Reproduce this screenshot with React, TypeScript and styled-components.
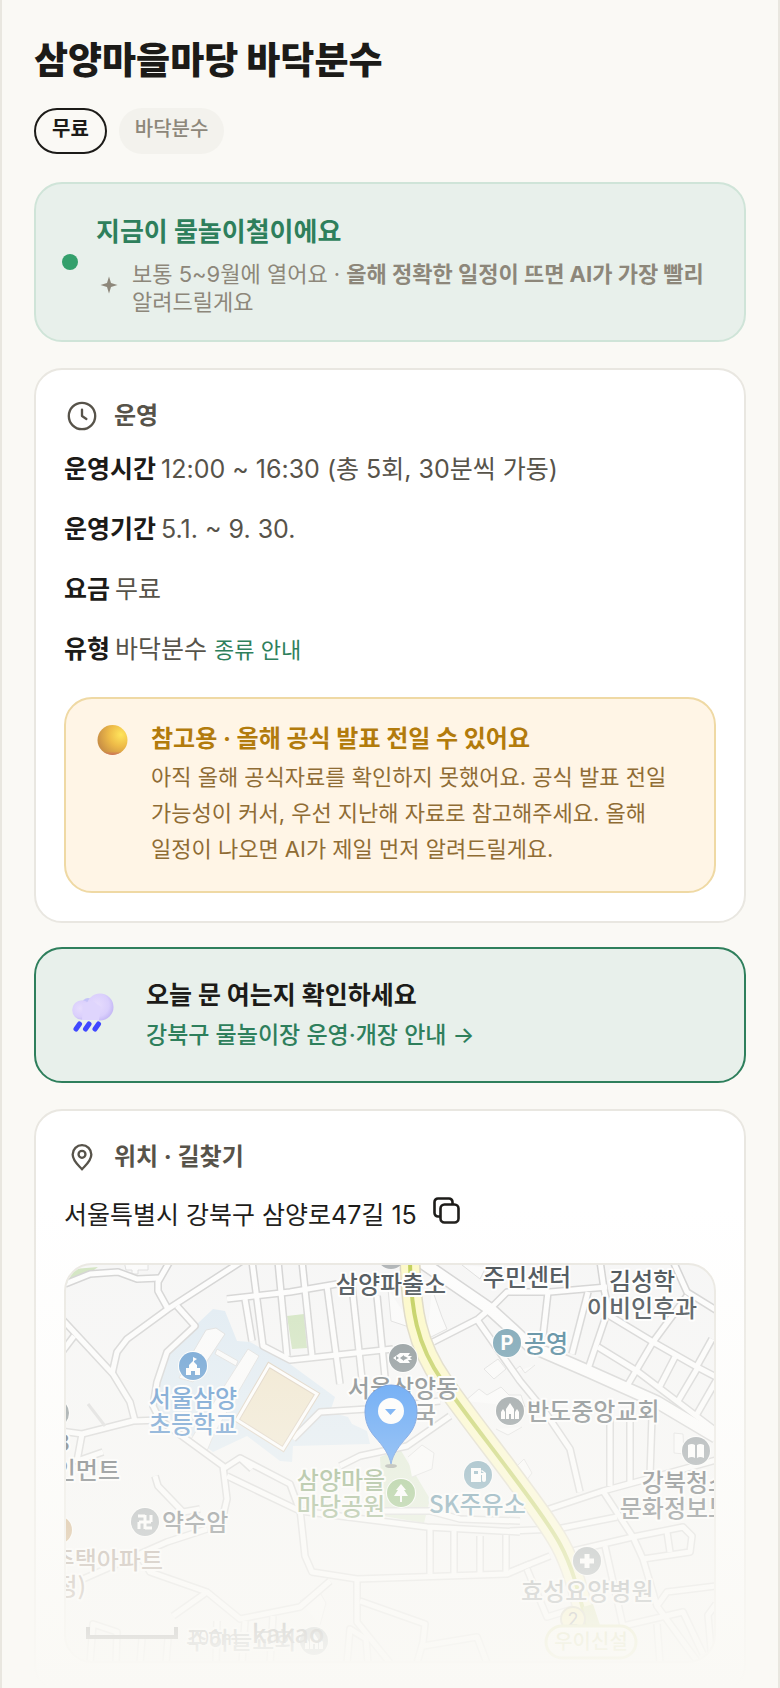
import React from "react";
import styled, { createGlobalStyle, css } from "styled-components";

const GlobalStyle = createGlobalStyle`
  *, *::before, *::after { box-sizing: border-box; }
  html, body { margin: 0; background: #faf9f5; }
  body {
    font-family: Inter, "Noto Sans CJK KR", sans-serif;
    color: #1c1b18;
    word-break: keep-all;
  }
  h1, h2, p, dl, dd { margin: 0; }
`;

const Frame = styled.main`
  position: relative;
  height: 100vh;
  overflow: hidden;
  padding: 32px;
  background: #faf9f5;
  border: 0 solid #e9e7e0;
  border-width: 0 2px;
`;

const Title = styled.h1`
  font-size: 37px;
  line-height: 58px;
  font-weight: 800;
`;

const Tags = styled.ul`
  display: flex;
  gap: 12px;
  margin: 18px 0 28px;
  padding: 0;
  list-style: none;
`;

const Tag = styled.li<{ $outlined?: boolean }>`
  padding: 4px 16px 8px;
  border-radius: 24px;
  font-size: 20px;
  line-height: 34px;
  font-weight: 500;
  color: #8d877a;
  background: #f3f2ed;
  ${(p) =>
    p.$outlined &&
    css`
      padding: 2px 16px 6px;
      border: 2px solid #1c1b18;
      background: transparent;
      color: #1c1b18;
      font-weight: 700;
    `}
`;

const panel = css`
  border: 2px solid #e9e7e1;
  border-radius: 28px;
`;

const Season = styled.section`
  ${panel}
  display: flex;
  align-items: center;
  gap: 18px;
  margin-bottom: 26px;
  padding: 24px 26px;
  border-color: #cfe4d8;
  background: #e8f0eb;
`;

const Dot = styled.span`
  flex: none;
  width: 16px;
  height: 16px;
  border-radius: 50%;
  background: #34a06c;
`;

const SeasonTitle = styled.h2`
  margin-bottom: 4px;
  font-size: 26px;
  line-height: 48px;
  font-weight: 700;
  color: #2e7f5c;
`;

const SeasonNote = styled.div`
  display: flex;
  align-items: center;
  gap: 14px;
  padding-left: 4px;
  color: #8d877a;
  font-size: 22px;
  line-height: 28px;

  svg { flex: none; margin-bottom: 6px; }
`;

const Card = styled.section`
  ${panel}
  margin-bottom: 24px;
  padding: 28px;
  background: #fff;
`;

const CardTitle = styled.h2`
  display: flex;
  align-items: center;
  gap: 14px;
  font-size: 24px;
  line-height: 36px;
  font-weight: 700;
  color: #57534a;

  svg { margin: 0 2px; flex: none; }
`;

const Facts = styled.dl`
  display: grid;
  gap: 20px;
  margin: 15px 0 27px;
  font-size: 25px;
  line-height: 40px;
  color: #57534a;
`;

const Fact = styled.div`
  display: flex;
  align-items: baseline;
  gap: 5px;

  dt { font-weight: 700; color: #1c1b18; }
  a { font-size: 22px; color: #2e7f5c; text-decoration: none; }
`;

const Notice = styled.aside`
  ${panel}
  display: flex;
  gap: 21px;
  padding: 22px 30px 24px;
  border-color: #efd9a4;
  background: #fff5e6;

  svg { flex: none; margin-top: 2px; }
`;

const NoticeTitle = styled.h2`
  margin-bottom: 2px;
  font-size: 24px;
  line-height: 36px;
  font-weight: 700;
  color: #b27b0c;
`;

const NoticeText = styled.p`
  font-size: 22px;
  line-height: 36px;
  color: #8f6c34;
`;

const OpenLink = styled.a`
  ${panel}
  display: flex;
  align-items: center;
  gap: 26px;
  margin-bottom: 26px;
  padding: 26px 36px;
  border-color: #2e7f5c;
  background: #e8f0eb;
  text-decoration: none;
  font-size: 23px;
  line-height: 40px;
  font-weight: 500;
  color: #2e7f5c;

  strong {
    display: block;
    font-size: 25px;
    font-weight: 700;
    color: #1c1b18;
  }
`;

const Address = styled.div`
  display: flex;
  align-items: center;
  gap: 14px;
  margin: 18px 0 26px;
  font-size: 25px;
  line-height: 44px;
`;

const CopyButton = styled.button`
  display: flex;
  padding: 0 0 8px;
  border: 0;
  background: none;
  color: #1c1b18;
`;

const MapBox = styled.div`
  ${panel}
  height: 400px;
  overflow: hidden;
  background: #f6f6f6;

  svg { display: block; width: 100%; height: 100%; }
`;

const Fade = styled.div`
  position: absolute;
  inset: auto -2px 0;
  height: 480px;
  background: linear-gradient(rgba(250, 249, 245, 0), #faf9f5);
  pointer-events: none;
`;

const ClockIcon = () => (
  <svg width="32" height="32" viewBox="0 0 24 24" fill="none" stroke="currentColor" strokeWidth="1.750" strokeLinecap="round" strokeLinejoin="round" aria-hidden>
    <circle cx="12" cy="12" r="9.900" />
    <path d="M12 7.200V12l3.300 2.200" />
  </svg>
);

const PinIcon = () => (
  <svg width="32" height="32" viewBox="0 0 24 24" fill="none" stroke="currentColor" strokeWidth="1.750" strokeLinecap="round" strokeLinejoin="round" aria-hidden>
    <path d="M12 21.200c-1.500-2-7-6-7-11.100a7 7 0 0 1 14 0c0 5.100-5.500 9.100-7 11.100z" />
    <circle cx="12" cy="10" r="2.600" />
  </svg>
);

const CopyIcon = () => (
  <svg width="32" height="32" viewBox="0 0 32 32" fill="none" stroke="currentColor" strokeWidth="2.600" strokeLinejoin="round" aria-hidden>
    <rect x="9.500" y="9.500" width="18" height="18" rx="4" />
    <path d="M9.500 21.500H7a3.500 3.500 0 0 1-3.500-3.500V7A3.500 3.500 0 0 1 7 3.500h11a3.500 3.500 0 0 1 3.500 3.500v2.500" />
  </svg>
);

const SparkIcon = () => (
  <svg width="18" height="18" viewBox="0 0 18 18" fill="currentColor" aria-hidden>
    <path d="M9 .5l2 6.500 6.500 2-6.500 2-2 6.500-2-6.500L.5 9 7 7z" />
  </svg>
);

const CoinIcon = () => (
  <svg width="34" height="34" viewBox="0 0 34 34" aria-hidden>
    <defs>
      <radialGradient id="coin" cx=".78" cy=".32" r=".8">
        <stop offset="0" stopColor="#ffe55c" />
        <stop offset=".5" stopColor="#eebb48" />
        <stop offset="1" stopColor="#c98f45" />
      </radialGradient>
      <linearGradient id="rim" x1="0" y1="0" x2="0" y2="1">
        <stop offset=".88" stopColor="#d0705a" stopOpacity="0" />
        <stop offset="1" stopColor="#d0705a" />
      </linearGradient>
    </defs>
    <circle cx="16.500" cy="17" r="15" fill="url(#coin)" />
    <circle cx="16.500" cy="17" r="15" fill="url(#rim)" />
  </svg>
);

const RainIcon = () => (
  <svg width="48" height="48" viewBox="0 0 48 48" aria-hidden>
    <defs>
      <radialGradient id="puff" cx=".4" cy=".42" r=".62">
        <stop offset="0" stopColor="#e6dcfd" />
        <stop offset=".7" stopColor="#dacffc" />
        <stop offset="1" stopColor="#c4b8f5" />
      </radialGradient>
    </defs>
    <circle cx="16" cy="13" r="6" fill="#c5c3f8" />
    <circle cx="28" cy="16" r="13.500" fill="url(#puff)" />
    <circle cx="10" cy="19" r="9.800" fill="url(#puff)" />
    <path d="M11 12l10-2 8 6-2 13H10z" fill="#dfd5fd" />
    <path d="M7.500 33L4 38M17 33l-3.500 5M26.500 33L23 38" stroke="#4048ff" strokeWidth="5" strokeLinecap="round" />
  </svg>
);

const STREETS = [
  "65,1285 90,1275 118,1273 137,1280 160,1279",
  "170,1262 158,1283 158,1292 168,1310",
  "242,1262 168,1310 127,1340 117,1353 112,1375",
  "62,1320 113,1375 130,1403 135,1422",
  "60,1432 82,1435 133,1422 160,1421 223,1467 227,1500 223,1517",
  "62,1353 74,1337",
  "177,1307 195,1327 167,1353 157,1383 153,1407 160,1421",
  "82,1435 77,1462 103,1453",
  "227,1300 290,1293 337,1285",
  "252,1262 263,1347 290,1361 393,1350",
  "278,1262 287,1357",
  "302,1262 312,1357",
  "245,1300 252,1342",
  "327,1287 340,1385",
  "352,1287 362,1380",
  "377,1297 385,1378",
  "433,1343 478,1320 493,1307 507,1293 550,1293 607,1288",
  "478,1322 520,1382 543,1410 570,1450 580,1493",
  "548,1293 543,1337",
  "588,1293 572,1355",
  "600,1262 604,1290 610,1317 653,1343 697,1368 716,1378",
  "605,1320 588,1370",
  "598,1348 637,1372 716,1432",
  "687,1297 653,1343 627,1387",
  "673,1262 687,1293 716,1311",
  "712,1340 697,1367",
  "675,1358 660,1387",
  "697,1370 678,1402",
  "716,1382 697,1415",
  "610,1420 610,1487",
  "630,1423 630,1483",
  "652,1417 650,1477",
  "543,1512 603,1492 647,1480 716,1461",
  "603,1492 633,1538 643,1560 657,1607 697,1662",
  "510,1532 557,1530 617,1518",
  "573,1552 633,1538 683,1528 692,1537 690,1553 643,1560",
  "667,1533 670,1553",
  "510,1573 550,1557",
  "527,1570 547,1618 573,1610",
  "605,1547 623,1627",
  "657,1607 667,1593 716,1587",
  "623,1627 683,1613 703,1655",
  "716,1605 708,1616 712,1662",
  "657,1625 660,1664",
  "300,1510 305,1557 312,1573 357,1580 507,1575 530,1565",
  "240,1459 290,1485 300,1512 427,1528 520,1533",
  "227,1477 300,1512",
  "223,1470 240,1459 252,1470",
  "430,1528 430,1575",
  "454,1532 454,1575",
  "480,1537 480,1575",
  "506,1536 506,1575",
  "330,1582 300,1608 240,1620 207,1593 150,1573 140,1557",
  "357,1580 357,1623 390,1664",
  "360,1602 425,1625 423,1643 417,1664",
  "423,1647 477,1638 487,1664",
  "347,1664 350,1630 366,1640 368,1664",
  "155,1477 158,1487 183,1513 200,1510",
  "83,1580 167,1543 207,1530",
  "207,1593 173,1617",
  "90,1664 93,1625 117,1633 116,1664",
  "140,1664 142,1640",
  "166,1664 168,1640",
  "216,1664 217,1622",
  "242,1664 245,1622",
  "270,1664 273,1617",
  "293,1440 320,1413 367,1410 440,1402",
  "340,1467 360,1457 407,1447 450,1417",
  "383,1512 430,1512 460,1520 520,1522",
];

const AVENUE = "420,1262 490,1310 512,1330 530,1347 590,1373 657,1403 716,1438";
const MAIN_ROAD = "M410 1262C411 1310 416 1345 443 1383S490 1446 510 1473S548 1523 560 1545S578 1590 588 1630";

type Tone = "dark" | "grey" | "blue" | "teal" | "green" | "tan";
const TONES: Record<Tone, { text: string; badge: string }> = {
  dark: { text: "#3b444a", badge: "#8b9499" },
  grey: { text: "#646c70", badge: "#7e898d" },
  blue: { text: "#4484c6", badge: "#5291cd" },
  teal: { text: "#39768f", badge: "#6496aa" },
  green: { text: "#71955c", badge: "#7eb364" },
  tan: { text: "#8a7464", badge: "#bf9154" },
};

type Label = { x: number; y: number; text: string; tone: Tone; anchor?: "start" | "middle" | "end" };
const LABELS: Label[] = [
  { x: 391, y: 1294, text: "삼양파출소", tone: "dark", anchor: "middle" },
  { x: 527, y: 1287, text: "주민센터", tone: "dark", anchor: "middle" },
  { x: 642, y: 1291, text: "김성학", tone: "dark", anchor: "middle" },
  { x: 642, y: 1318, text: "이비인후과", tone: "dark", anchor: "middle" },
  { x: 524, y: 1353, text: "공영", tone: "teal" },
  { x: 527, y: 1421, text: "반도중앙교회", tone: "grey" },
  { x: 403, y: 1398, text: "서울삼양동", tone: "grey", anchor: "middle" },
  { x: 403, y: 1424, text: "우체국", tone: "grey", anchor: "middle" },
  { x: 193, y: 1408, text: "서울삼양", tone: "blue", anchor: "middle" },
  { x: 193, y: 1434, text: "초등학교", tone: "blue", anchor: "middle" },
  { x: 341, y: 1490, text: "삼양마을", tone: "green", anchor: "middle" },
  { x: 341, y: 1516, text: "마당공원", tone: "green", anchor: "middle" },
  { x: 429, y: 1514, text: "SK주유소", tone: "teal" },
  { x: 697, y: 1492, text: "강북청소년", tone: "dark", anchor: "middle" },
  { x: 697, y: 1518, text: "문화정보도서관", tone: "dark", anchor: "middle" },
  { x: 162, y: 1532, text: "약수암", tone: "dark" },
  { x: 521, y: 1601, text: "효성요양병원", tone: "grey" },
  { x: 70, y: 1452, text: "3", tone: "dark", anchor: "end" },
  { x: 120, y: 1480, text: "인먼트", tone: "dark", anchor: "end" },
  { x: 163, y: 1570, text: "주택아파트", tone: "tan", anchor: "end" },
  { x: 86, y: 1596, text: "정)", tone: "tan", anchor: "end" },
  { x: 186, y: 1650, text: "주하늘교회", tone: "grey" },
];

const Badge = ({ x, y, tone, children }: { x: number; y: number; tone: Tone; children?: React.ReactNode }) => (
  <g transform={`translate(${x} ${y})`}>
    <circle r="15" fill="#fff" />
    <circle r="14" fill={TONES[tone].badge} />
    <g fill="#fff">{children}</g>
  </g>
);

const church = <path d="M-4 8V-2L0-8l4 6V8H1V3h-2v5zM-9 8v-7l2-3 2 3v7zM5 8v-7l2-3 2 3v7z" />;

const AreaMap = () => (
  <svg viewBox="66 1266 648 396" preserveAspectRatio="xMidYMid slice" role="img" aria-label="삼양마을마당 주변 지도">
    <path d="M66 1285l8-15 24-2-8 6z" fill="#cfe3bd" />
    <path d="M287 1317l17-2 3 34-15 1z" fill="#cfe3bd" />
    <path d="M195 1327L213 1310l12 2 12 30 13 1 40 22 45 33-5 15 18 5 4 7 15 7 3 13-77 2-1 16-12-1-33-25-34 16-56-43V1383l10-30z" fill="#deeaf3" />
    <path d="M380 1458l20-8 30 50-6 24-41-7z" fill="#dbe8cf" />
    <g fill="#fbfbfb" stroke="#dcdcdc">
      <path d="M216 1329l9 6-32 48-14-4 7-14 20-34z" />
      <path d="M217 1350l21 12-2 5-21-12z" />
      <path d="M248 1350l11 7-45 78-7 17-17-10 12-20z" />
      <path d="M124 1262l2 9h6v4h6v-4h10v-9z" />
      <path d="M388 1290l3 32 24 8M432 1290l10 28 5 12-20 10M462 1266l18 14 6-12" />
      <path d="M484 1370l14-10 8 10-12 10zM465 1402l14-12 8 6 14-8 8 8 12 0 4 12M496 1430l12 6 14-8M408 1458l14-12 12 8-2 16-20 8M674 1434l9 1 1 20-10-1z" />
      <path d="M510 1375l10-8 5 7 10-8M512 1472l12-12 8 14-6 8M300 1602l18-12 8 14-6 22" />
    </g>
    <g fill="none" strokeLinejoin="round" strokeLinecap="butt">
      {STREETS.map((s) => <polyline key={s} points={s} stroke="#d0d0d0" strokeWidth="8" />)}
      <polyline points={AVENUE} stroke="#d0d0d0" strokeWidth="14" />
      {STREETS.map((s) => <polyline key={s} points={s} stroke="#fdfdfd" strokeWidth="5" />)}
      <polyline points={AVENUE} stroke="#fdfdfd" strokeWidth="11" />
      <path d="M88 1405l17 22" stroke="#d8d8d8" strokeWidth="3" />
      <path d={MAIN_ROAD} stroke="#d9d4bd" strokeWidth="21" />
      <path d={MAIN_ROAD} stroke="#fdf9c4" strokeWidth="18" />
      <path d={MAIN_ROAD} stroke="#bccb4a" strokeWidth="4" />
    </g>
    <path d="M269 1366l48 29-34 55-46-29z" fill="#efe4c9" stroke="#d9cbb8" strokeWidth="5" />
    <path d="M269 1366l48 29-34 55-46-29z" fill="none" stroke="#fff" strokeWidth="3" />
    <path d="M583 1608l10-3 8 24h-14z" fill="#cbd58a" />

    <circle cx="391" cy="1256" r="14" fill="#a8adb0" />
    <Badge x={193} y={1367} tone="blue">
      <path d="M-7 9V2h3v-3l4-4v-4l4 2-3 2v1l3 3v3h3v7H2V5h-4v4z" />
    </Badge>
    <Badge x={403} y={1359} tone="grey">
      <path d="M-10 0l7-5 4 0 6 0-2 3h4l-2 2 2 2H5l2 3H-3z" />
      <path d="M-4 0l-3-2v4zM-3 0l4-3v6zM5 0L1-2v4z" fill={TONES.grey.badge} />
    </Badge>
    <Badge x={507} y={1344} tone="teal">
      <text y="7" textAnchor="middle" fontFamily="Inter" fontSize="20" fontWeight="700">P</text>
    </Badge>
    <Badge x={510} y={1412} tone="grey">{church}</Badge>
    <Badge x={478} y={1476} tone="teal">
      <path d="M-7-7H3V7H-7zM4-5l4 3v7a2 2 0 0 1-4 0V0H3v-2h3l-3-2z" />
      <path d="M-4-4h4v3h-4z" fill={TONES.teal.badge} />
    </Badge>
    <Badge x={401} y={1494} tone="green">
      <path d="M0-9l5 6H3l4 6H1v6h-2V3h-6l4-6h-2z" />
    </Badge>
    <Badge x={145} y={1523} tone="dark">
      <path d="M0-7v14M-6 0H6M-6 7V0M-7-6H0M6-7V0M0 6h7" stroke="#fff" strokeWidth="3" />
    </Badge>
    <Badge x={696} y={1452} tone="dark">
      <path d="M-8-6q4-2 7 0V7q-3-2-7 0zM8-6q-4-2-7 0V7q3-2 7 0z" />
    </Badge>
    <Badge x={587} y={1562} tone="grey">
      <path d="M-2.500-7h5v4.500H7v5H2.500V7h-5V2.500H-7v-5h4.500z" />
    </Badge>
    <Badge x={314} y={1642} tone="grey">{church}</Badge>
    <Badge x={55} y={1414} tone="grey" />
    <Badge x={58} y={1531} tone="tan" />

    <g fontFamily='"Noto Sans CJK KR", sans-serif' fontSize="24" fontWeight="500" stroke="#fff" strokeWidth="4" strokeLinejoin="round" paintOrder="stroke">
      {LABELS.map((l) => (
        <text key={l.text} x={l.x} y={l.y} fill={TONES[l.tone].text} textAnchor={l.anchor}>{l.text}</text>
      ))}
    </g>

    <circle cx="573" cy="1620" r="12" fill="#f3ea92" stroke="#b5b08a" strokeWidth="2" />
    <text x="573" y="1627" textAnchor="middle" fontFamily="Inter" fontSize="18" fill="#555">2</text>
    <rect x="546" y="1627" width="90" height="32" rx="16" fill="#fbfbef" stroke="#cdd27a" strokeWidth="3" />
    <text x="591" y="1650" textAnchor="middle" fontFamily='"Noto Sans CJK KR", sans-serif' fontSize="20" fontWeight="500" fill="#b9bf62">우이신설</text>

    <path d="M88 1628v10h88v-10" fill="none" stroke="#3a3a3a" strokeWidth="4" />
    <text x="187" y="1646" fontFamily='"Noto Sans CJK KR", sans-serif' fontSize="20" fill="#555">100m</text>
    <text x="252" y="1644" fontFamily='"Noto Sans CJK KR", sans-serif' fontSize="25" fontWeight="500" fill="#3a3a3a">kakao</text>

    <ellipse cx="391" cy="1467" rx="6" ry="2" fill="#555" opacity=".6" />
    <path d="M391 1465c-2-10-8-18-16-27-7-8-10-16-10-26a26 26 0 0 1 52 0c0 10-3 18-10 26-8 9-14 17-16 27z" fill="#2b87f5" stroke="#2a6fd6" />
    <circle cx="391" cy="1412" r="13" fill="#fff" />
    <path d="M385 1410h11l-5.500 6z" fill="#2b87f5" />
  </svg>
);

export default function App() {
  return (
    <>
      <GlobalStyle />
      <Frame>
        <Title>삼양마을마당 바닥분수</Title>
        <Tags>
          <Tag $outlined>무료</Tag>
          <Tag>바닥분수</Tag>
        </Tags>

        <Season>
          <Dot />
          <div>
            <SeasonTitle>지금이 물놀이철이에요</SeasonTitle>
            <SeasonNote>
              <SparkIcon />
              <p>보통 5~9월에 열어요 · <b>올해 정확한 일정이 뜨면 AI가 가장 빨리</b> 알려드릴게요</p>
            </SeasonNote>
          </div>
        </Season>

        <Card>
          <CardTitle><ClockIcon />운영</CardTitle>
          <Facts>
            <Fact><dt>운영시간</dt><dd>12:00 ~ 16:30 (총 5회, 30분씩 가동)</dd></Fact>
            <Fact><dt>운영기간</dt><dd>5.1. ~ 9. 30.</dd></Fact>
            <Fact><dt>요금</dt><dd>무료</dd></Fact>
            <Fact><dt>유형</dt><dd>바닥분수 <a href="#types">종류 안내</a></dd></Fact>
          </Facts>
          <Notice>
            <CoinIcon />
            <div>
              <NoticeTitle>참고용 · 올해 공식 발표 전일 수 있어요</NoticeTitle>
              <NoticeText>아직 올해 공식자료를 확인하지 못했어요. 공식 발표 전일 가능성이 커서, 우선 지난해 자료로 참고해주세요. 올해 일정이 나오면 AI가 제일 먼저 알려드릴게요.</NoticeText>
            </div>
          </Notice>
        </Card>

        <OpenLink href="#notice">
          <RainIcon />
          <span><strong>오늘 문 여는지 확인하세요</strong>강북구 물놀이장 운영·개장 안내 →</span>
        </OpenLink>

        <Card>
          <CardTitle><PinIcon />위치 · 길찾기</CardTitle>
          <Address>
            <span>서울특별시 강북구 삼양로47길 15</span>
            <CopyButton type="button" aria-label="주소 복사"><CopyIcon /></CopyButton>
          </Address>
          <MapBox><AreaMap /></MapBox>
        </Card>
        <Fade />
      </Frame>
    </>
  );
}
